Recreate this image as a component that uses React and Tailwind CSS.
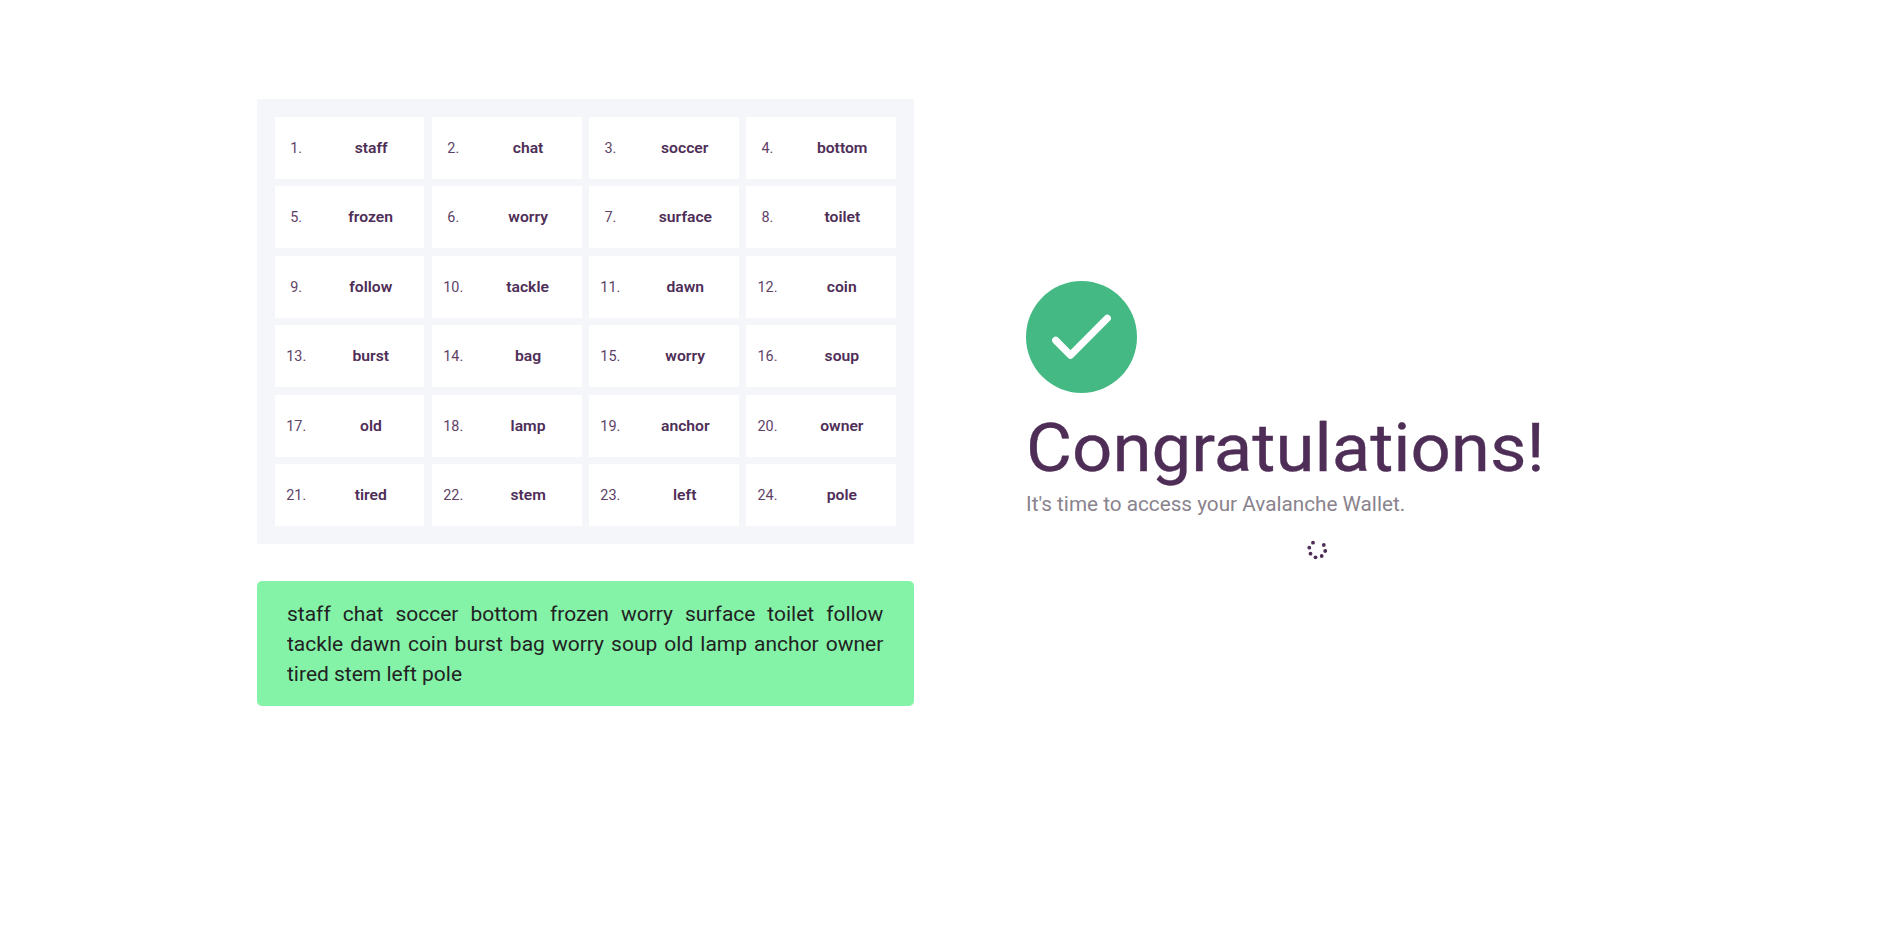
const words = "staff chat soccer bottom frozen worry surface toilet follow tackle dawn coin burst bag worry soup old lamp anchor owner tired stem left pole".split(" ");
const lines = [words.slice(0, 9), words.slice(9, 20), words.slice(20)];

const dots = [[6, 2.7], [2.3, 7.7], [3.5, 13.7], [8.5, 17.3], [14.7, 16], [18.2, 11], [16.8, 5]];

function WordGrid() {
  return (
    <div className="grid h-[445px] grid-cols-[repeat(4,149.45px)] grid-rows-[repeat(6,62px)] gap-x-[7.65px] gap-y-[7.4px] bg-[#f5f6fa] p-[18px]">
      {words.map((w, i) => (
        <div key={i} className="grid grid-cols-[42.4px_1fr] items-center bg-white pt-[1.5px] text-center text-[14.4px] text-[#4e2d57]">
          <span className="opacity-90">{i + 1}.</span>
          <span className="font-semibold"><span className="inline-block scale-x-[1.09]">{w}</span></span>
        </div>
      ))}
    </div>
  );
}

function Phrase() {
  return (
    <div className="mt-[37px] h-[125px] rounded-[5px] bg-[#84f3a8] pl-[30px] pr-[30px] pt-[18px] text-[20px] leading-[30px] text-[#222]">
      {lines.map((l, i) => (
        <p key={i} className={i < 2 ? "w-[568.5px] origin-left scale-x-[1.049] [text-align-last:justify]" : "origin-left scale-x-[1.049]"}>{l.join(" ")}</p>
      ))}
    </div>
  );
}

export default function App() {
  return (
    <main className="h-[943px] w-full bg-white font-['Roboto',sans-serif]">
      <div className="flex pl-[257px] pt-[99px]">
        <section className="w-[657px]">
          <WordGrid />
          <Phrase />
        </section>
        <section className="ml-[112px] mt-[182px] w-[583px]">
          <svg className="block" width="111" height="112" viewBox="0 0 111 112">
            <ellipse cx="55.5" cy="56" rx="55.5" ry="56" fill="#44b984" />
            <path d="M29.7 59.4 L44.5 74.2 L81.3 37.3" fill="none" stroke="#fff" strokeWidth="7.2" strokeLinecap="round" strokeLinejoin="round" />
          </svg>
          <h1 className="mt-[15px] origin-left scale-x-[1.064] text-[66.5px] leading-[80px] text-[#4e2d57] [-webkit-text-stroke:0.3px_#4e2d57]">Congratulations!</h1>
          <p className="mt-px origin-left scale-x-[1.036] text-[20px] leading-[30px] text-[#8a838e]">It's time to access your Avalanche Wallet.</p>
          <svg className="ml-[281px] mt-[21px] block" width="20" height="20" viewBox="0 0 20 20" fill="#4e2d57">
            {dots.map(([x, y]) => <circle key={x} cx={x} cy={y} r="1.9" />)}
          </svg>
        </section>
      </div>
    </main>
  );
}
